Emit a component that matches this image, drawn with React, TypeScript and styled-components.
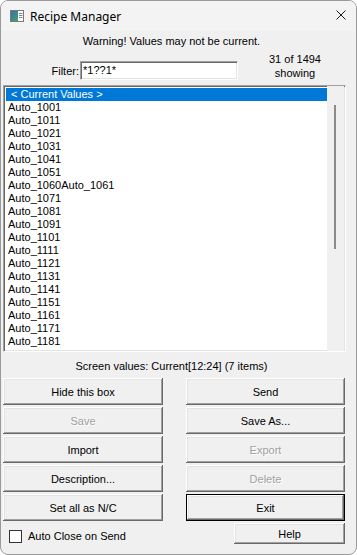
import * as React from 'react';
import styled, { createGlobalStyle } from 'styled-components';

const GlobalStyle = createGlobalStyle`
  html, body {
    margin: 0;
    padding: 0;
    background: #ffffff;
  }
  * {
    box-sizing: border-box;
  }
`;

const Window = styled.div`
  width: 357px;
  height: 555px;
  border: 1px solid #9a9a9a;
  border-radius: 8px;
  background: #f0f0f0;
  overflow: hidden;
  display: flex;
  flex-direction: column;
  font-family: "Liberation Sans", Arial, sans-serif;
  font-size: 11px;
  color: #000;
`;

const TitleBar = styled.div`
  height: 30px;
  display: flex;
  align-items: center;
  padding-left: 9px;
  background: #f3f3f3;
`;

const TitleText = styled.span`
  font-family: "Noto Sans", "Open Sans", sans-serif;
  font-size: 12px;
  margin-left: 6px;
  flex: 1;
`;

const CloseBox = styled.div`
  width: 30px;
  height: 30px;
  display: flex;
  align-items: center;
  justify-content: center;
  padding-bottom: 2px;
`;

const Body = styled.div`
  flex: 1;
  display: flex;
  flex-direction: column;
  padding: 0 10px 0 2px;
`;

const Warning = styled.div`
  height: 20px;
  line-height: 20px;
  text-align: center;
  padding-right: 6px;
`;

const FilterRow = styled.div`
  height: 34px;
  display: flex;
  align-items: flex-start;
  padding-top: 1px;
`;

const FilterLabel = styled.label`
  width: 77px;
  text-align: right;
  margin-top: 10px;
  padding-right: 1px;
  line-height: 18px;
`;

const FilterInput = styled.div`
  width: 158px;
  height: 19px;
  margin-top: 9px;
  background: #fff;
  border-top: 1px solid #a0a0a0;
  border-left: 1px solid #a0a0a0;
  border-bottom: 1px solid #fff;
  border-right: 1px solid #fff;
  box-shadow: inset 1px 1px 0 #696969, inset -1px -1px 0 #e3e3e3;
  padding: 1px 2px;
  line-height: 15px;
`;

const Count = styled.div`
  flex: 1;
  text-align: center;
  line-height: 14px;
  padding-left: 6px;
`;

const ListBox = styled.div`
  height: 267px;
  display: flex;
  background: #fff;
  border-top: 1px solid #a0a0a0;
  border-left: 1px solid #a0a0a0;
  border-bottom: 1px solid #fff;
  border-right: 1px solid #fff;
  box-shadow: inset 1px 1px 0 #696969, inset -1px -1px 0 #e3e3e3;
  padding: 2px 0 1px 2px;
`;

const Items = styled.div`
  flex: 1;
  overflow: hidden;
`;

const Item = styled.div<{ $selected?: boolean }>`
  height: 13px;
  line-height: 13px;
  padding-left: 2px;
  white-space: pre;
  background: ${p => (p.$selected ? '#0078d7' : 'transparent')};
  color: ${p => (p.$selected ? '#fff' : '#000')};
`;

const ScrollTrack = styled.div`
  width: 17px;
  background: #f0f0f0;
  margin: -2px 1px -1px 0;
  padding: 19px 0 0 7px;
`;

const Thumb = styled.div`
  width: 2px;
  height: 144px;
  background: #8b8b8b;
`;

const Status = styled.div`
  height: 26px;
  line-height: 28px;
  text-align: center;
  padding-right: 6px;
`;

const ButtonGrid = styled.div`
  display: grid;
  grid-template-columns: 160px 159px;
  column-gap: 23px;
  row-gap: 2px;
`;

const Button = styled.div<{ $disabled?: boolean; $default?: boolean }>`
  height: 27px;
  display: flex;
  align-items: center;
  justify-content: center;
  background: #f0f0f0;
  color: ${p => (p.$disabled ? '#a0a0a0' : '#000')};
  text-shadow: ${p => (p.$disabled ? '1px 1px 0 #fff' : 'none')};
  border: ${p => (p.$default ? '1px solid #000' : 'none')};
  box-shadow: inset -1px -1px 0 #696969, inset 1px 1px 0 #fff,
    inset -2px -2px 0 #a0a0a0, inset 2px 2px 0 #e3e3e3;
  padding-top: 1px;
`;

const BottomRow = styled.div`
  display: flex;
  align-items: center;
  margin-top: 2px;
  height: 21px;
`;

const CheckLabel = styled.label`
  flex: 1;
  display: flex;
  align-items: center;
  padding-left: 6px;
  margin-top: 5px;
`;

const CheckBox = styled.span`
  width: 13px;
  height: 13px;
  background: #fff;
  border: 1px solid #333;
  margin-right: 6px;
`;

const HelpButton = styled(Button)`
  width: 111px;
  height: 21px;
  margin-right: 1px;
`;

const AppIcon = () => (
  <svg width="14" height="12" viewBox="0 0 14 12">
    <defs>
      <linearGradient id="ig" x1="0" y1="0" x2="1" y2="1">
        <stop offset="0" stopColor="#3a6fb0" />
        <stop offset="1" stopColor="#3aa66a" />
      </linearGradient>
    </defs>
    <rect x="0.5" y="0.5" width="13" height="11" fill="#fff" stroke="#7a7a7a" />
    <rect x="1" y="1" width="7" height="10" fill="url(#ig)" />
    <line x1="9" y1="3.5" x2="12.5" y2="3.5" stroke="#888" />
    <line x1="9" y1="5.5" x2="12.5" y2="5.5" stroke="#888" />
    <line x1="9" y1="7.5" x2="12.5" y2="7.5" stroke="#888" />
  </svg>
);

const CloseIcon = () => (
  <svg width="10" height="10" viewBox="0 0 10 10">
    <path d="M0.5 0.5 L9.5 9.5 M9.5 0.5 L0.5 9.5" stroke="#1a1a1a" strokeWidth="1" />
  </svg>
);

const recipes = [
  'Auto_1001', 'Auto_1011', 'Auto_1021', 'Auto_1031', 'Auto_1041', 'Auto_1051',
  'Auto_1060Auto_1061', 'Auto_1071', 'Auto_1081', 'Auto_1091', 'Auto_1101',
  'Auto_1111', 'Auto_1121', 'Auto_1131', 'Auto_1141', 'Auto_1151', 'Auto_1161',
  'Auto_1171', 'Auto_1181', 'Auto_1191',
];

const buttons: { label: string; disabled?: boolean; isDefault?: boolean }[] = [
  { label: 'Hide this box' },
  { label: 'Send' },
  { label: 'Save', disabled: true },
  { label: 'Save As...' },
  { label: 'Import' },
  { label: 'Export', disabled: true },
  { label: 'Description...' },
  { label: 'Delete', disabled: true },
  { label: 'Set all as N/C' },
  { label: 'Exit', isDefault: true },
];

export default function App() {
  return (
    <>
      <GlobalStyle />
      <Window>
        <TitleBar>
          <AppIcon />
          <TitleText>Recipe Manager</TitleText>
          <CloseBox>
            <CloseIcon />
          </CloseBox>
        </TitleBar>
        <Body>
          <Warning>Warning! Values may not be current.</Warning>
          <FilterRow>
            <FilterLabel>Filter:</FilterLabel>
            <FilterInput>*1??1*</FilterInput>
            <Count>
              31 of 1494
              <br />
              showing
            </Count>
          </FilterRow>
          <ListBox>
            <Items>
              <Item $selected>{' < Current Values >'}</Item>
              {recipes.map(r => (
                <Item key={r}>{r}</Item>
              ))}
            </Items>
            <ScrollTrack>
              <Thumb />
            </ScrollTrack>
          </ListBox>
          <Status>Screen values: Current[12:24] (7 items)</Status>
          <ButtonGrid>
            {buttons.map(b => (
              <Button key={b.label} $disabled={b.disabled} $default={b.isDefault}>
                {b.label}
              </Button>
            ))}
          </ButtonGrid>
          <BottomRow>
            <CheckLabel>
              <CheckBox />
              Auto Close on Send
            </CheckLabel>
            <HelpButton>Help</HelpButton>
          </BottomRow>
        </Body>
      </Window>
    </>
  );
}
